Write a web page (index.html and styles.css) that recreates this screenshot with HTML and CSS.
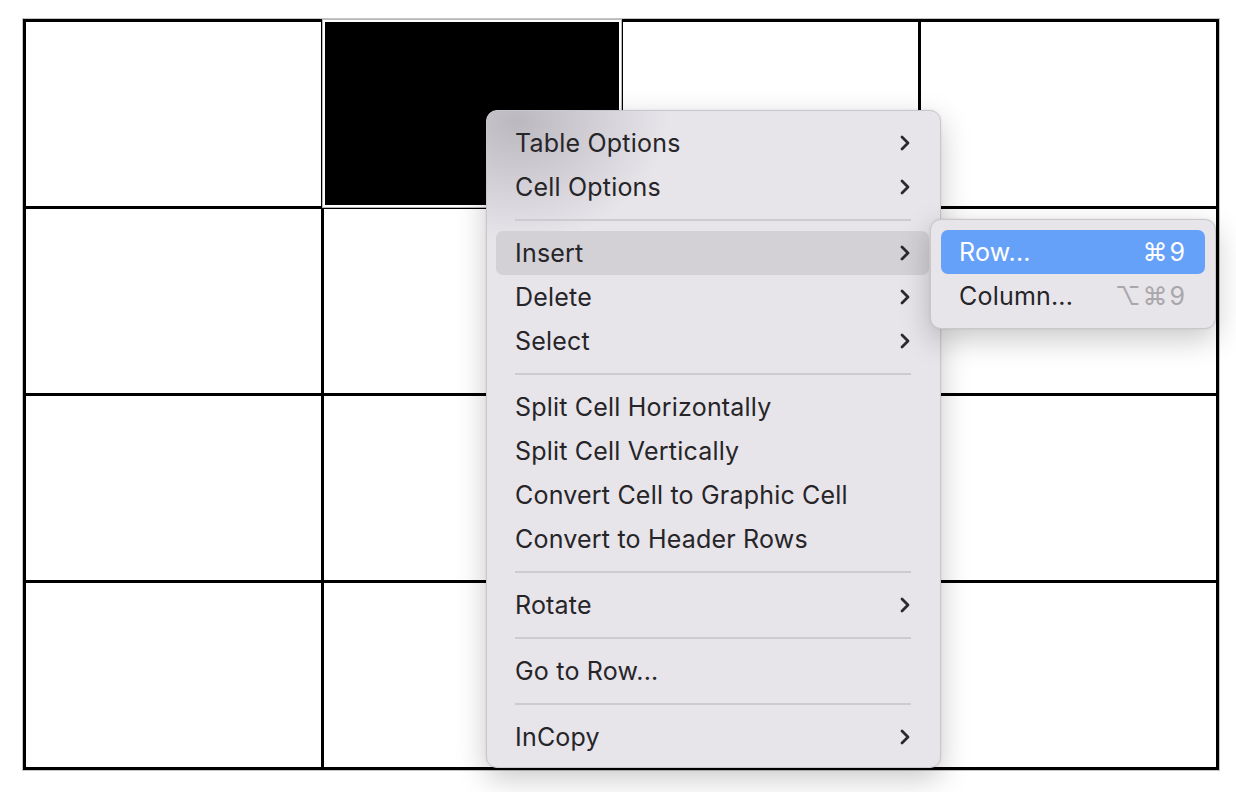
FILE: index.html
```html
<!DOCTYPE html>
<html lang="en">
<head>
    <meta charset="UTF-8">
    <title>Table Context Menu</title>
    <link rel="stylesheet" href="styles.css">
</head>
<body>

    <div class="page">
        <div class="table">
            <div class="cell"></div>
            <div class="cell selected"></div>
            <div class="cell"></div>
            <div class="cell"></div>
            <div class="cell"></div>
            <div class="cell"></div>
            <div class="cell"></div>
            <div class="cell"></div>
            <div class="cell"></div>
            <div class="cell"></div>
            <div class="cell"></div>
            <div class="cell"></div>
            <div class="cell"></div>
            <div class="cell"></div>
            <div class="cell"></div>
            <div class="cell"></div>
        </div>

        <!-- context menu -->
        <div class="menu">
            <div class="item">Table Options <svg class="chevron" viewBox="0 0 14 18"><polyline points="4,3 10,9 4,15"/></svg></div>
            <div class="item">Cell Options <svg class="chevron" viewBox="0 0 14 18"><polyline points="4,3 10,9 4,15"/></svg></div>
            <div class="separator"></div>
            <div class="item active">Insert <svg class="chevron" viewBox="0 0 14 18"><polyline points="4,3 10,9 4,15"/></svg></div>
            <div class="item">Delete <svg class="chevron" viewBox="0 0 14 18"><polyline points="4,3 10,9 4,15"/></svg></div>
            <div class="item">Select <svg class="chevron" viewBox="0 0 14 18"><polyline points="4,3 10,9 4,15"/></svg></div>
            <div class="separator"></div>
            <div class="item">Split Cell Horizontally</div>
            <div class="item">Split Cell Vertically</div>
            <div class="item">Convert Cell to Graphic Cell</div>
            <div class="item">Convert to Header Rows</div>
            <div class="separator"></div>
            <div class="item">Rotate <svg class="chevron" viewBox="0 0 14 18"><polyline points="4,3 10,9 4,15"/></svg></div>
            <div class="separator"></div>
            <div class="item">Go to Row...</div>
            <div class="separator"></div>
            <div class="item">InCopy <svg class="chevron" viewBox="0 0 14 18"><polyline points="4,3 10,9 4,15"/></svg></div>
        </div>

        <div class="submenu">
            <div class="item highlighted">Row... <span class="shortcut">&#8984;9</span></div>
            <div class="item">Column... <span class="shortcut">&#8997;&#8984;9</span></div>
        </div>
    </div>

</body>
</html>
```

FILE: styles.css
```css
body {
    margin: 0;
    background-color: white;
    font-family: Inter, "Noto Sans", sans-serif;
}
.page {
    position: relative;
    width: 1236px;
    height: 792px;
    padding: 19px 0 0 23px;
    box-sizing: border-box;
}
.table {
    width: 1196px;
    height: 751px;
    box-sizing: border-box;
    display: grid;
    grid-template-columns: repeat(4, 1fr);
    grid-template-rows: repeat(4, 1fr);
    gap: 3px;
    padding: 3px;
    background-color: black;
    box-shadow: 0 0 0 1px #c4c4c4;
}
.cell {
    background-color: white;
}
.cell.selected {
    background-color: black;
    border: 2px solid white;
    outline: 1px solid #b8b8b8;
    margin: -2px -1px -1px -1px;
}

/* context menu */
.menu, .submenu {
    position: absolute;
    box-sizing: border-box;
    padding: 10px;
    background-color: #e7e4ea;
    border: 1px solid #c9c7cb;
    border-radius: 11px;
    box-shadow: 0 10px 30px rgba(0, 0, 0, 0.22), 0 0 3px rgba(0, 0, 0, 0.08);
    color: #262528;
}
.menu {
    left: 486px;
    top: 110px;
    width: 455px;
    padding: 10px 11px 8px 9px;
    background-image: radial-gradient(ellipse 150px 120px at 30px 10px, rgba(180, 176, 184, 0.85), rgba(231, 228, 234, 0));
}
.item {
    height: 44px;
    display: flex;
    align-items: center;
    justify-content: space-between;
    padding: 0 17px 0 19px;
    border-radius: 7px;
    font-size: 25px;
    letter-spacing: 0.2px;
}
.item.active {
    background-color: #d3d0d6;
}
.chevron {
    width: 14px;
    height: 18px;
    fill: none;
    stroke: #2a292c;
    stroke-width: 2.8;
    stroke-linecap: round;
    stroke-linejoin: round;
}
.separator {
    height: 2px;
    margin: 10px 18px 10px 19px;
    background-color: #cdcad0;
}
.submenu {
    left: 930px;
    top: 219px;
    width: 286px;
}
.submenu .item {
    padding: 0 18px 0 18px;
}
.item.highlighted {
    background-color: #66a1f9;
    color: white;
}
.shortcut {
    color: #a9a7ab;
    letter-spacing: 2px;
}
.highlighted .shortcut {
    color: white;
}
```
